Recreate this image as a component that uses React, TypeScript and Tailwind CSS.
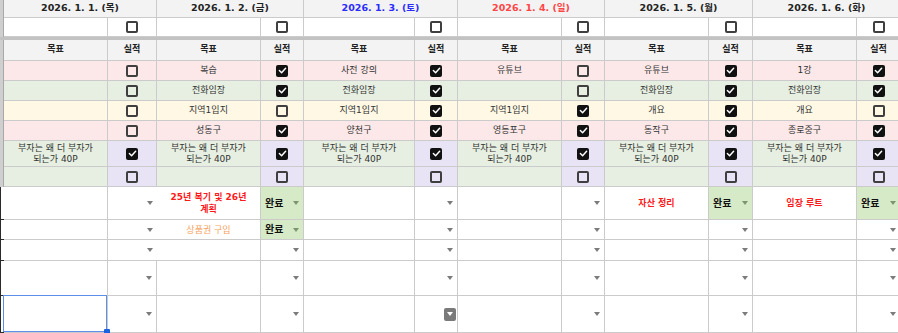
import type { ReactNode } from "react";

/** Weekly goal tracker sheet, drawn as a spreadsheet grid. */

const COLS =
  "grid grid-cols-[4px_104px_49px_104px_43px_111px_43px_104px_43px_104px_44px_104px_44px]";
const LINE = "border-r border-b border-[#cbcbcb]";

type Goal = { text: string; done: boolean };
type Task = { text?: string; tone?: "red" | "orange"; status?: boolean };

const BOOK = "부자는 왜 더 부자가\n되는가 40P";

const days = [
  { label: "2026. 1. 1. (목)", color: "text-[#222]" },
  { label: "2026. 1. 2. (금)", color: "text-[#222]" },
  { label: "2026. 1. 3. (토)", color: "text-[#2b2bff]" },
  { label: "2026. 1. 4. (일)", color: "text-[#ff4545]" },
  { label: "2026. 1. 5. (월)", color: "text-[#222]" },
  { label: "2026. 1. 6. (화)", color: "text-[#222]" },
];

// goals[day][row]
const goals: Goal[][] = [
  [
    { text: "", done: false },
    { text: "", done: false },
    { text: "", done: false },
    { text: "", done: false },
    { text: BOOK, done: true },
    { text: "", done: false },
  ],
  [
    { text: "복습", done: true },
    { text: "전화임장", done: true },
    { text: "지역1입지", done: false },
    { text: "성동구", done: true },
    { text: BOOK, done: true },
    { text: "", done: false },
  ],
  [
    { text: "사전 강의", done: true },
    { text: "전화임장", done: true },
    { text: "지역1입지", done: true },
    { text: "양천구", done: true },
    { text: BOOK, done: true },
    { text: "", done: false },
  ],
  [
    { text: "유튜브", done: false },
    { text: "", done: false },
    { text: "지역1입지", done: true },
    { text: "영등포구", done: true },
    { text: BOOK, done: true },
    { text: "", done: false },
  ],
  [
    { text: "유튜브", done: true },
    { text: "전화임장", done: true },
    { text: "개요", done: true },
    { text: "동작구", done: true },
    { text: BOOK, done: true },
    { text: "", done: false },
  ],
  [
    { text: "1강", done: true },
    { text: "전화임장", done: true },
    { text: "개요", done: false },
    { text: "종로중구", done: true },
    { text: BOOK, done: true },
    { text: "", done: false },
  ],
];

const goalRows = [
  { h: "h-[20px]", goal: "bg-[#fce8e8]", done: "bg-[#fce8e8]" },
  { h: "h-[20px]", goal: "bg-[#e6efe1]", done: "bg-[#e6efe1]" },
  { h: "h-[20px]", goal: "bg-[#fff8e4]", done: "bg-[#fff8e4]" },
  { h: "h-[20px]", goal: "bg-[#fce8e8]", done: "bg-[#fce8e8]" },
  { h: "h-[26px]", goal: "bg-[#e6efe1]", done: "bg-[#e8e4f6]" },
  { h: "h-[20px]", goal: "bg-[#e6efe1]", done: "bg-[#e8e4f6]" },
];

// tasks[row][day]
const tasks: Task[][] = [
  [{}, { text: "25년 복기 및 26년\n계획", tone: "red", status: true }, {}, {}, { text: "자산 정리", tone: "red", status: true }, { text: "임장 루트", tone: "red", status: true }],
  [{}, { text: "상품권 구입", tone: "orange", status: true }, {}, {}, {}, {}],
  [{}, {}, {}, {}, {}, {}],
  [{}, {}, {}, {}, {}, {}],
  [{}, {}, {}, {}, {}, {}],
];
const taskHeights = ["h-[33px]", "h-[20px]", "h-[21px]", "h-[35px]", "h-[37px]"];

function Box(props: { on: boolean }) {
  if (props.on) {
    return (
      <span className="flex h-[12px] w-[12px] items-center justify-center rounded-[2px] bg-[#111]">
        <svg viewBox="0 0 12 12" className="h-[11px] w-[11px]">
          <path d="M2.6 6.1 5 8.4 9.4 3.6" fill="none" stroke="#fff" strokeWidth="1.6" strokeLinecap="round" strokeLinejoin="round" />
        </svg>
      </span>
    );
  }
  return <span className="h-[12px] w-[12px] rounded-[2px] border-2 border-[#3f3f3f]" />;
}

function Arrow(props: { color?: string }) {
  return (
    <span
      className={`h-0 w-0 border-x-[3.5px] border-t-[4px] border-x-transparent ${props.color ?? "border-t-[#7b7b7b]"}`}
    />
  );
}

function Strip(props: { lower?: boolean }) {
  return props.lower ? (
    <div className="border-b border-l border-[#2a2a2a] bg-white" />
  ) : (
    <div className="border-r border-[#a9a9a9] bg-[#cfcfcf]" />
  );
}

function Row(props: { h: string; children: ReactNode }) {
  return <div className={`${COLS} ${props.h}`}>{props.children}</div>;
}

function TaskCell(props: { task: Task; selected?: boolean; noRightLine?: boolean }) {
  const { task } = props;
  const tone =
    task.tone === "red" ? "font-bold text-[#ff1a1a]" : task.tone === "orange" ? "text-[#f5a25d]" : "";
  return (
    <div
      className={`relative flex items-center justify-center whitespace-pre-line px-[3px] text-center leading-[12px] ${tone} ${
        props.noRightLine ? "border-b border-[#cbcbcb]" : LINE
      }`}
    >
      {task.text}
      {props.selected && (
        <>
          <div className="absolute -left-px -top-px bottom-0 right-0 border-[1.5px] border-[#5b8fe8]" />
          <div className="absolute -bottom-[3px] -right-[3px] h-[6px] w-[6px] rounded-[1px] bg-[#1a62e0]" />
        </>
      )}
    </div>
  );
}

function StatusCell(props: { task: Task; active?: boolean }) {
  if (props.task.status) {
    return (
      <div className={`flex items-center justify-between bg-[#d6eac8] pl-[4px] pr-[4px] ${LINE}`}>
        <span className="text-[10px] font-bold text-[#111]">완료</span>
        <Arrow color="border-t-[#7d9470]" />
      </div>
    );
  }
  if (props.active) {
    return (
      <div className={`flex items-center justify-end pr-px ${LINE}`}>
        <span className="flex h-[13px] w-[12px] items-center justify-center rounded-[2px] bg-[#7a7a7a]">
          <Arrow color="border-t-white" />
        </span>
      </div>
    );
  }
  return (
    <div className={`flex items-center justify-end pr-[4px] ${LINE}`}>
      <Arrow />
    </div>
  );
}

export default function App() {
  return (
    <main className="h-[333px] w-[898px] overflow-hidden bg-white font-['DejaVu_Sans','Noto_Sans_CJK_KR',sans-serif] text-[9px] text-[#333]">
      <Row h="h-[18px]">
        <Strip />
        {days.map((d) => (
          <div
            key={d.label}
            className={`col-span-2 flex items-center justify-center bg-[#f3f3f3] text-[9.5px] font-bold ${d.color} ${LINE}`}
          >
            {d.label}
          </div>
        ))}
      </Row>

      <Row h="h-[19px]">
        <Strip />
        {days.map((d) => [
          <div key={d.label + "g"} className={`bg-white ${LINE}`} />,
          <div key={d.label + "c"} className={`flex items-center justify-center ${LINE}`}>
            <Box on={false} />
          </div>,
        ])}
      </Row>

      <div className="h-[3px] bg-[#c2c2c2]" />

      <Row h="h-[21px]">
        <Strip />
        {days.map((d) => [
          <div key={d.label + "g"} className={`flex items-center justify-center bg-[#f3f3f3] font-bold text-[#222] ${LINE}`}>
            목표
          </div>,
          <div key={d.label + "c"} className={`flex items-center justify-center bg-[#f3f3f3] font-bold text-[#222] ${LINE}`}>
            실적
          </div>,
        ])}
      </Row>

      {goalRows.map((r, ri) => (
        <Row key={ri} h={r.h}>
          <Strip />
          {goals.map((g, di) => [
            <div
              key={di + "g"}
              className={`flex items-center justify-center whitespace-pre-line px-[3px] text-center leading-[11px] ${r.goal} ${LINE}`}
            >
              {g[ri].text}
            </div>,
            <div key={di + "c"} className={`flex items-center justify-center ${r.done} ${LINE}`}>
              <Box on={g[ri].done} />
            </div>,
          ])}
        </Row>
      ))}

      {tasks.map((row, ri) => (
        <Row key={ri} h={taskHeights[ri]}>
          <Strip lower />
          {row.map((t, di) => [
            <TaskCell key={di + "t"} task={t} selected={ri === 4 && di === 0} />,
            di === 0 && ri < 3 ? (
              <div key={di + "s"} className="flex items-center justify-end border-b border-[#cbcbcb] pr-[4px]">
                <Arrow />
              </div>
            ) : (
              <StatusCell key={di + "s"} task={t} active={ri === 4 && di === 2} />
            ),
          ])}
        </Row>
      ))}
    </main>
  );
}
